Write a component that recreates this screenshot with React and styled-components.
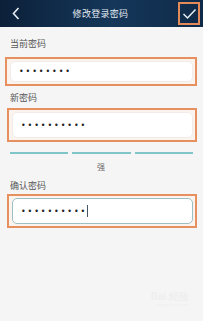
import styled, { createGlobalStyle } from 'styled-components';

const GlobalStyle = createGlobalStyle`
  html, body {
    margin: 0;
    padding: 0;
    background: #f6f5f5;
  }
  body {
    font-family: "Noto Sans CJK SC", "Noto Sans", sans-serif;
  }
`;

const Page = styled.div`
  width: 203px;
  height: 321px;
  background: #f6f5f5;
  overflow: hidden;
  position: relative;
`;

const Header = styled.div`
  height: 27px;
  background: linear-gradient(90deg, #0c2039 0%, #15375a 55%, #0f2a48 100%);
  display: flex;
  align-items: center;
  justify-content: space-between;
  padding: 0 3px 0 9px;
`;

const Title = styled.div`
  color: #e4ebf2;
  font-size: 9px;
  letter-spacing: 0.3px;
`;

const IconBtn = styled.div`
  width: ${({ boxed }) => (boxed ? '18px' : '14px')};
  height: ${({ boxed }) => (boxed ? '19px' : '14px')};
  display: flex;
  align-items: center;
  justify-content: center;
  border: ${({ boxed }) => (boxed ? '2px solid #e38a5a' : 'none')};
`;

const Body = styled.div`
  padding: 11px 6px 0 5px;
  display: flex;
  flex-direction: column;
`;

const Label = styled.div`
  color: #555;
  font-size: 9px;
  line-height: 12px;
  padding-left: 5px;
  margin-bottom: ${({ gap }) => gap || 8}px;
`;

const Frame = styled.div`
  border: 2px solid #e6905f;
  padding: 2px 2px 2px 3px;
  margin-left: ${({ shift }) => shift || 0}px;
  margin-bottom: ${({ after }) => after || 0}px;
  background: #fbf3ee;
`;

const Field = styled.div`
  height: ${({ h }) => h || 23}px;
  background: #fff;
  border-radius: 5px;
  border: 1px solid ${({ focused }) => (focused ? '#9cbfc6' : '#f1ece9')};
  display: flex;
  align-items: center;
  padding-left: 8px;
  box-sizing: border-box;
`;

const Dots = styled.span`
  color: #222;
  font-family: "DejaVu Sans", sans-serif;
  font-size: 8px;
  letter-spacing: 1.9px;
`;

const Caret = styled.span`
  width: 1px;
  height: 12px;
  background: #456;
  margin-left: 0px;
`;

const Strength = styled.div`
  display: grid;
  grid-template-columns: repeat(3, 1fr);
  gap: 4px;
  padding: 0 4px 0 5px;
  margin-top: 10px;
`;

const Bar = styled.div`
  height: 2px;
  background: #80c6c9;
`;

const Level = styled.div`
  text-align: center;
  color: #666;
  font-size: 8px;
  line-height: 10px;
  margin: 8px 0 8px;
`;

const Watermark = styled.div`
  position: absolute;
  right: 14px;
  bottom: 13px;
  color: #efefef;
  font-family: "Liberation Sans", sans-serif;
  font-size: 10px;
  font-weight: bold;
  text-align: right;
  line-height: 10px;
`;

const Small = styled.div`
  font-size: 4px;
  font-weight: normal;
  line-height: 6px;
`;

export default function App() {
  return (
    <Page>
      <GlobalStyle />
      <Header>
        <IconBtn>
          <svg width="10" height="13" viewBox="0 0 10 13">
            <path d="M7.5 1 L2.5 6.5 L7.5 12" fill="none" stroke="#e8eef4" strokeWidth="1.6" />
          </svg>
        </IconBtn>
        <Title>修改登录密码</Title>
        <IconBtn boxed>
          <svg width="15" height="12" viewBox="0 0 15 12">
            <path d="M1.5 6 L5.5 10 L13.5 1.5" fill="none" stroke="#e8eef4" strokeWidth="1.5" />
          </svg>
        </IconBtn>
      </Header>
      <Body>
        <Label gap={7}>当前密码</Label>
        <Frame shift={0} after={6}>
          <Field h={21}>
            <Dots>••••••••</Dots>
          </Field>
        </Frame>
        <Label gap={4}>新密码</Label>
        <Frame shift={2}>
          <Field h={26}>
            <Dots>••••••••••</Dots>
          </Field>
        </Frame>
        <Strength>
          <Bar />
          <Bar />
          <Bar />
        </Strength>
        <Level>强</Level>
        <Label gap={2}>确认密码</Label>
        <Frame shift={2}>
          <Field focused h={26}>
            <Dots>••••••••••</Dots>
            <Caret />
          </Field>
        </Frame>
      </Body>
      <Watermark>
        Bai 经验
        <Small>jingyan.baidu.com</Small>
      </Watermark>
    </Page>
  );
}
